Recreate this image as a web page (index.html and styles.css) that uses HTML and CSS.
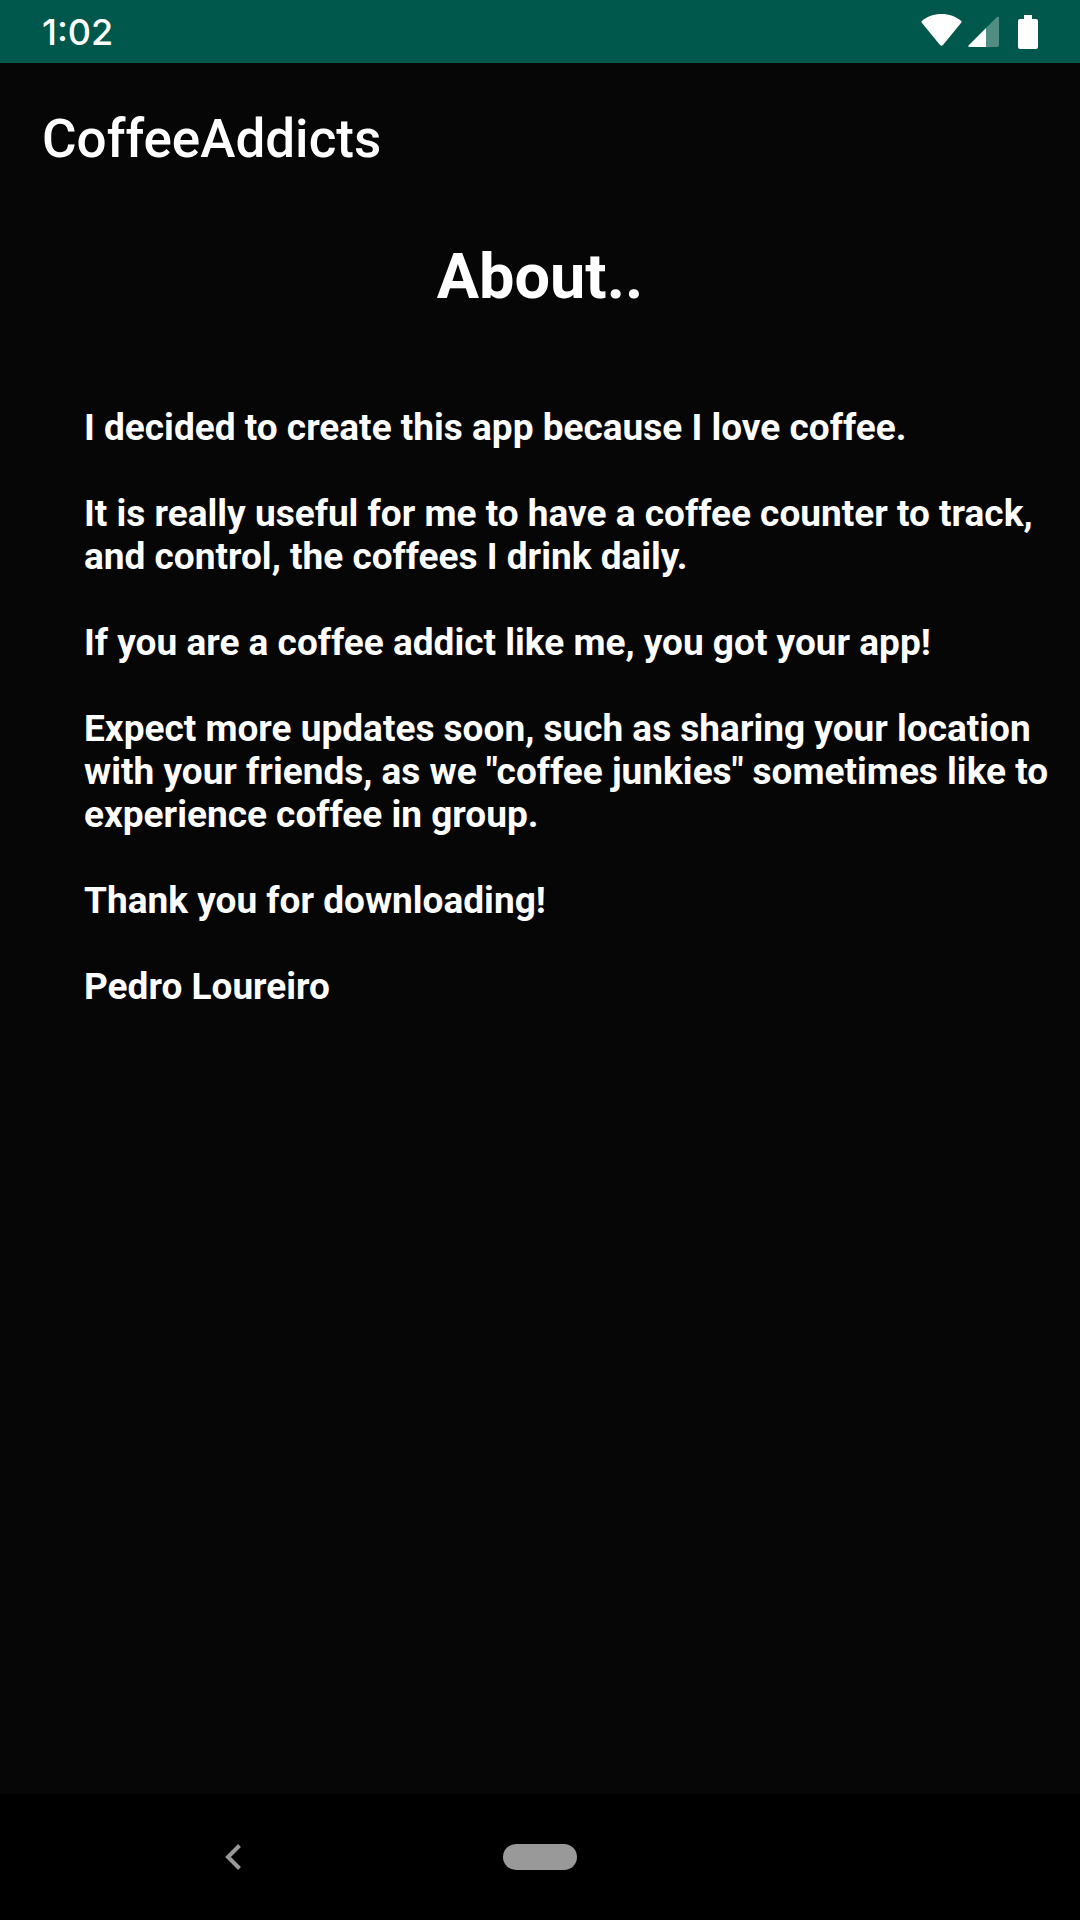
FILE: index.html
```html
<!DOCTYPE html>
<html lang="en">
<head>
<meta charset="utf-8">
<meta name="viewport" content="width=device-width, initial-scale=1">
<title>CoffeeAddicts</title>
<link rel="stylesheet" href="styles.css">
</head>
<body>
<div class="status-bar">
  <time class="clock">1:02</time>
  <div class="status-icons">
    <svg class="wifi" viewBox="0 0 41 35" aria-hidden="true"><path d="M19 31 0.6 8.6Q0 7.600 1 6.800C6 2.500 13 0 20.500 0S35 2.500 40 6.800q1 .8.4 1.800L22 31q-1.500 1.500-3 0z"/></svg>
    <svg class="signal" viewBox="0 0 31 31" aria-hidden="true"><path class="faded" d="M18 12 29 1q2-1 2 1v27q0 2-2 2H18z"/><path d="M1 29 18 12v19H2q-3 0-1-2z"/></svg>
    <svg class="battery" viewBox="0 0 20 34" aria-hidden="true"><path d="M6 0h8v4h4q2 0 2 2v26q0 2-2 2H2q-2 0-2-2V6q0-2 2-2h4z"/></svg>
  </div>
</div>
<header class="app-bar">CoffeeAddicts</header>
<main class="about">
  <h1 class="title">About..</h1>
  <div class="story">
    <p>I decided to create this app because I love coffee.</p>
    <p>It is really useful for me to have a coffee counter to track, and control, the coffees I drink daily.</p>
    <p>If you are a coffee addict like me, you got your app!</p>
    <p>Expect more updates soon, such as sharing your location with your friends, as we "coffee junkies" sometimes like to experience coffee in group.</p>
    <p>Thank you for downloading!</p>
    <p>Pedro Loureiro</p>
  </div>
</main>
<nav class="nav-bar">
  <button class="back" aria-label="Back"><svg viewBox="0 0 16 26" aria-hidden="true"><path d="M14.500 1.500 3 13l11.500 11.500"/></svg></button>
  <button class="home" aria-label="Home"></button>
</nav>
</body>
</html>
```

FILE: styles.css
```css
* {
  box-sizing: border-box;
}

body {
  margin: 0;
  min-height: 100vh;
  display: flex;
  flex-direction: column;
  background: #060606;
  color: #fff;
  font-family: Roboto, sans-serif;
}

.status-bar {
  display: flex;
  align-items: center;
  justify-content: space-between;
  height: 63px;
  padding: 0 42px;
  background: #00574b;
}

.clock {
  font-family: Inter, sans-serif;
  font-size: 36px;
  font-weight: 500;
  line-height: 42px;
}

.status-icons {
  display: flex;
  align-items: center;
  fill: #fff;
}

.wifi {
  width: 41px;
  height: 35px;
  margin-right: 6px;
}

.signal {
  width: 31px;
  height: 31px;
  margin-right: 19px;
}

.faded {
  opacity: 0.32;
}

.battery {
  width: 20px;
  height: 34px;
}

.app-bar {
  display: flex;
  align-items: center;
  height: 152px;
  padding: 0 42px;
  font-size: 53px;
  font-weight: 500;
}

.about {
  flex: 1;
}

.title {
  margin: 20px 0 0;
  font-size: 63px;
  font-weight: 700;
  line-height: 84px;
  text-align: center;
}

.story {
  display: flex;
  flex-direction: column;
  gap: 43px;
  margin-top: 87px;
  padding: 0 24px 0 84px;
  font-size: 37px;
  font-weight: 700;
  line-height: 43px;
}

.story p {
  margin: 0;
}

.nav-bar {
  display: grid;
  grid-template-columns: 1fr 74px 1fr;
  align-items: center;
  height: 126px;
  background: #000;
}

.nav-bar button {
  border: 0;
  padding: 0;
  background: none;
}

.nav-bar .back {
  justify-self: center;
  height: 26px;
  margin-right: 38px;
}

.back svg {
  display: block;
  width: 16px;
  height: 26px;
  fill: none;
  stroke: #999;
  stroke-width: 4;
}

.nav-bar .home {
  height: 26px;
  border-radius: 13px;
  background: #999;
}
```
